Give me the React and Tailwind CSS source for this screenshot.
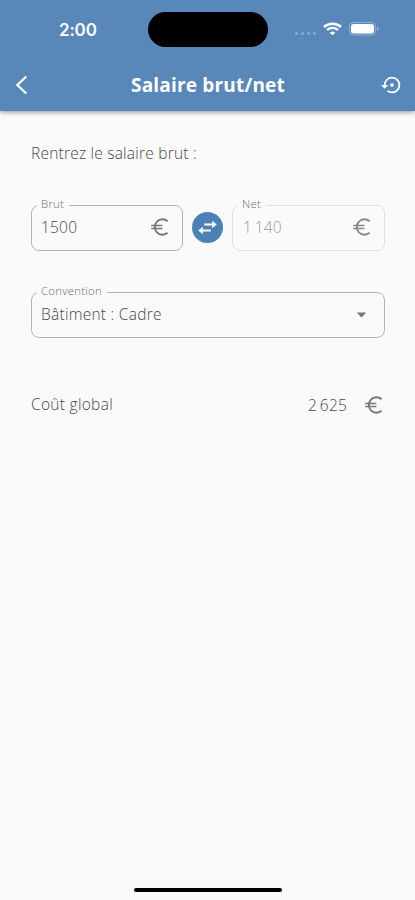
import React, { useState } from 'react';
import { MdArrowDropDown, MdSettingsBackupRestore } from 'react-icons/md';

const StatusBar = () => (
  <div className="flex h-[58px] items-center text-white">
    <span className="w-[148px] pt-[1px] pl-[59px] font-['Inter',sans-serif] text-[17px] leading-5 font-semibold tracking-[-0.2px]">2:00</span>
    <div className="h-[35px] w-[120px] rounded-full bg-black" />
    <div className="ml-[27px] mt-[8px] flex gap-[3px]">
      {[0, 1, 2, 3].map((dot) => (
        <span key={dot} className="h-[3px] w-[3px] rounded-full bg-white/30" />
      ))}
    </div>
    {/* Wifi */}
    <svg className="ml-[7px] h-[14px] w-[19px]" viewBox="0 0 19 15" preserveAspectRatio="none" fill="none" stroke="currentColor">
      <path d="M1 5.3a12.2 12.2 0 0 1 17 0" strokeWidth="2.8" />
      <path d="M4 8.6a7.8 7.8 0 0 1 11 0" strokeWidth="2.5" />
      <path d="M9.5 14.3 6.7 11.5a4 4 0 0 1 5.6 0z" fill="currentColor" stroke="none" />
    </svg>
    {/* Battery */}
    <svg className="ml-[7px] h-[14px] w-[31px]" viewBox="0 0 31 14">
      <rect x="0.5" y="0.5" width="26" height="12.5" rx="4" fill="none" stroke="white" strokeOpacity="0.35" />
      <rect x="2" y="2" width="23" height="9.5" rx="2.7" fill="white" />
      <path d="M28 5v4c1-.4 1.6-1.1 1.6-2s-.6-1.6-1.6-2z" fill="white" fillOpacity="0.4" />
    </svg>
  </div>
);

const EuroIcon = ({ className = '' }) => (
  <svg className={`h-[20px] w-[19px] ${className}`} viewBox="0 0 19 20" fill="none" stroke="currentColor">
    <path d="M17.6 4.2A7.7 7.7 0 1 0 17.6 15.8" strokeWidth="1.9" />
    <path d="M1.2 8.4H12.4M1.2 11.6H12.4" strokeWidth="1.5" />
  </svg>
);

const SwapIcon = () => (
  <svg className="h-[15px] w-[19px]" viewBox="0 0 19 15" fill="currentColor">
    <path d="M18.8 4.5 14.2.7v2.7H6.2v2.2h8v2.7z" />
    <path d="M.2 10.5 4.8 6.7v2.7h8v2.2h-8v2.7z" />
  </svg>
);

const Field = ({ label, disabled, className = '', children }) => (
  <fieldset
    className={`h-[53px] min-w-0 rounded-[8px] border ${
      disabled ? 'border-[#e2e2e2] text-[#9a9a9a]' : 'border-[#b4b4b4] text-[#484848]'
    } ${className}`}
  >
    <legend className="ml-[5px] h-[14px] pr-[5px] pl-[4px] text-[11.4px] leading-[11px] font-light tracking-[0.25px] text-[#6e6e6e]">{label}</legend>
    <div className="flex h-[30px] items-center justify-between pr-[13px] pl-[9px]">{children}</div>
  </fieldset>
);

const App = () => {
  const [brut, setBrut] = useState('1500');

  return (
    <div className="flex h-[900px] w-[415px] flex-col bg-[#fafafa] font-['Open_Sans',sans-serif] text-[#484848]">
      {/* Header */}
      <header className="h-[111px] bg-[#5887b9] shadow-[0_1px_5px_rgba(0,0,0,0.45)]">
        <StatusBar />
        <div className="flex h-[53px] items-center justify-between pr-[12px] pl-[15px] text-white">
          <button type="button" className="w-[20px]">
            <svg className="h-[20px] w-[13px]" viewBox="0 0 13 20" fill="none" stroke="currentColor" strokeWidth="2.2">
              <path d="M11.3 1.5 2.3 10l9 8.5" />
            </svg>
          </button>
          <h1 className="text-[19px] leading-6 font-bold tracking-[0.18px]">Salaire brut/net</h1>
          <button type="button">
            <MdSettingsBackupRestore className="h-[22px] w-[22px]" />
          </button>
        </div>
      </header>

      {/* Form */}
      <main className="flex-1 pt-[31px] pr-[30px] pl-[31px]">
        <p className="text-[15.5px] leading-[22px] font-light tracking-[0.22px]">Rentrez le salaire brut :</p>

        <div className="mt-[34px] flex items-center">
          <Field label="Brut" className="w-[152px]">
            <input
              value={brut}
              onChange={(e) => setBrut(e.target.value)}
              className="w-[90px] bg-transparent pt-[2px] text-[15.5px] font-light tracking-[0.2px] outline-none"
            />
            <EuroIcon className="text-[#777777]" />
          </Field>
          <button
            type="button"
            className="mt-[5px] ml-[9px] flex h-[31px] w-[31px] items-center justify-center rounded-full bg-[#4d80b5] text-white"
          >
            <SwapIcon />
          </button>
          <Field label="Net" disabled className="ml-auto w-[153px]">
            <span className="pt-[2px] pl-[1px] text-[15.5px] font-light tracking-[0.2px] [word-spacing:-1.5px]">1 140</span>
            <EuroIcon className="text-[#888888]" />
          </Field>
        </div>

        <Field label="Convention" className="mt-[34px] w-full">
          <span className="pt-[2px] text-[15.5px] font-light tracking-[0.27px]">Bâtiment : Cadre</span>
          <MdArrowDropDown className="mr-[-2px] h-[23px] w-[23px] text-[#777777]" />
        </Field>

        {/* Result */}
        <div className="mt-[55px] flex h-[24px] items-center">
          <span className="text-[15.5px] font-light tracking-[0.3px]">Coût global</span>
          <span className="ml-auto pt-[2px] text-[15.5px] font-light tracking-[0.2px] [word-spacing:-1.5px]">2 625</span>
          <EuroIcon className="mr-[2px] ml-[17px] text-[#777777]" />
        </div>
      </main>

      <div className="mx-auto mb-[8px] h-[4px] w-[148px] rounded-full bg-black" />
    </div>
  );
};

export default App;
